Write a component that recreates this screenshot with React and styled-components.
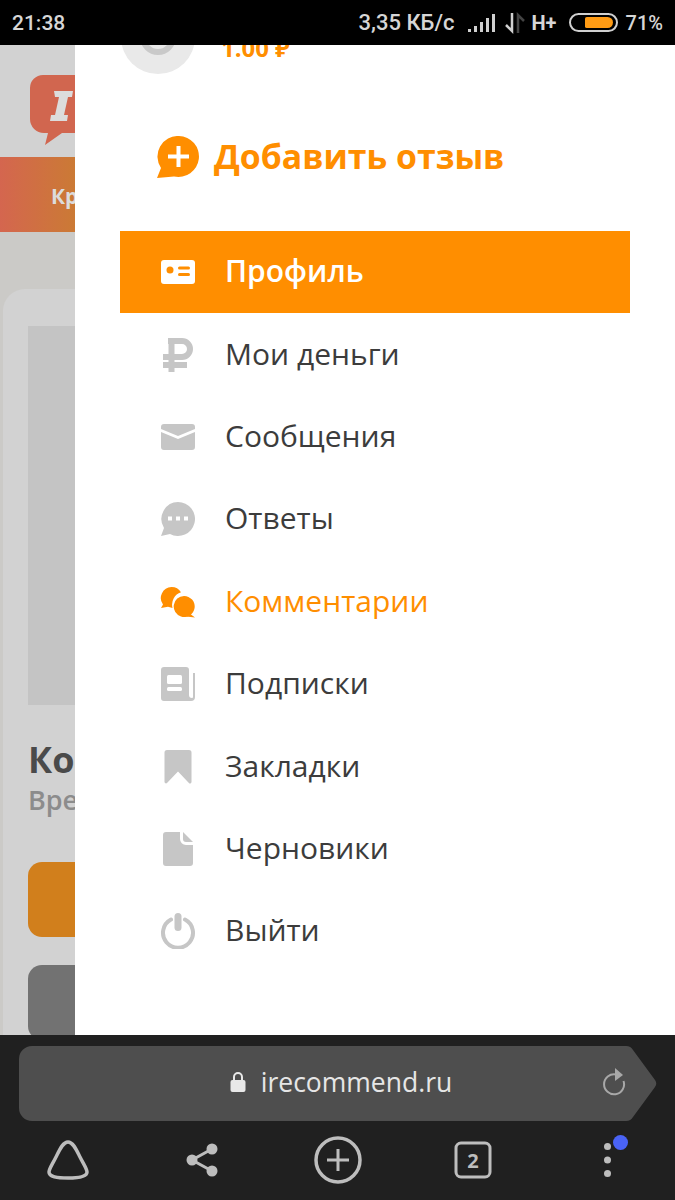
import React from 'react'
import styled, { createGlobalStyle } from 'styled-components'

const GlobalStyle = createGlobalStyle`
    html, body {
        margin: 0;
        padding: 0;
        background: #000;
    }
    * {
        box-sizing: border-box;
    }
`

const Screen = styled.div`
    width: 675px;
    height: 1200px;
    display: flex;
    flex-direction: column;
    overflow: hidden;
    font-family: "Open Sans", "Noto Sans", sans-serif;
`

const StatusBar = styled.div`
    height: 45px;
    flex: none;
    background: #000;
    color: #d6d6d6;
    display: flex;
    align-items: center;
    justify-content: space-between;
    padding: 0 12px;
    font-family: Roboto, sans-serif;
    font-size: 20px;
    font-weight: 500;
`

const Clock = styled.span`
    font-size: 21px;
`

const StatusRight = styled.div`
    display: flex;
    align-items: center;
`

const Speed = styled.span`
    font-size: 22px;
    margin-right: 13px;
`

const Network = styled.span`
    margin: 0 12px 0 7px;
    font-weight: 700;
`

const BatteryShell = styled.div`
    width: 49px;
    height: 19px;
    border: 2px solid #d0d0d0;
    border-radius: 10px;
    padding: 2px 3px 2px 14px;
    margin-right: 8px;
`

const BatteryFill = styled.div`
    height: 100%;
    background: #ff9b14;
    border-radius: 2px 6px 6px 2px;
`

const Main = styled.div`
    flex: 1;
    min-height: 0;
    display: grid;
    grid-template-columns: 75px 600px;
`

const Backdrop = styled.div`
    background: #d2d2d2;
    overflow: hidden;
    display: flex;
    flex-direction: column;
`

const LogoRow = styled.div`
    height: 112px;
    flex: none;
    padding: 28px 0 0 28px;
`

const Band = styled.div`
    height: 75px;
    flex: none;
    background: linear-gradient(90deg, #d4664f, #cb7a35);
    color: #dcdcdc;
    font-size: 21px;
    font-weight: 700;
    padding: 25px 0 0 51px;
    white-space: nowrap;
    overflow: hidden;
`

const Feed = styled.div`
    flex: 1;
    background: #cbcac7;
    padding-top: 57px;
    padding-left: 3px;
`

const Card = styled.div`
    height: 800px;
    width: 120px;
    background: #d2d2d2;
    border-radius: 22px 0 0 0;
    padding: 37px 0 0 25px;
`

const CardImage = styled.div`
    height: 379px;
    background: #c4c4c4;
`

const CardTitle = styled.div`
    margin-top: 32px;
    font-size: 36px;
    line-height: 46px;
    font-weight: 700;
    color: #4a4a4a;
    white-space: nowrap;
`

const CardSub = styled.div`
    font-size: 27px;
    line-height: 34px;
    font-weight: 600;
    color: #8c8c8c;
    white-space: nowrap;
`

const CardButton = styled.div`
    height: 75px;
    margin-top: ${p => p.$gap}px;
    border-radius: 14px 0 0 14px;
    background: ${p => p.$color};
`

const Drawer = styled.div`
    background: #fff;
    overflow: hidden;
    padding-left: 45px;
`

const Account = styled.div`
    display: flex;
    margin-top: -45px;
    height: 73px;
`

const Avatar = styled.div`
    width: 74px;
    height: 74px;
    margin-left: 1px;
    flex: none;
    border-radius: 50%;
    background: #e9e9e9;
    display: flex;
    align-items: center;
    justify-content: center;
`

const AvatarRing = styled.div`
    width: 36px;
    height: 36px;
    border-radius: 50%;
    border: 6px solid #c9c9c9;
`

const Balance = styled.div`
    margin: 33px 0 0 26px;
    font-size: 24px;
    line-height: 30px;
    font-weight: 700;
    color: #ff8e00;
    white-space: nowrap;
`

const AddReview = styled.div`
    height: 158px;
    display: flex;
    align-items: center;
    gap: 15px;
    padding: 10px 0 0 37px;
    color: #ff8e00;
    font-size: 33.8px;
    font-weight: 700;
`

const ReviewLabel = styled.span`
    margin-bottom: 3px;
`

const Menu = styled.div`
    width: 510px;
`

const MenuItem = styled.div`
    height: 82.4px;
    display: flex;
    align-items: center;
    gap: 29px;
    padding-left: 40px;
    font-size: 30px;
    font-weight: ${p => (p.$active ? 600 : 400)};
    color: ${p => (p.$active ? '#fff' : p.$accent ? '#ff8e00' : '#3c3c3c')};
    background: ${p => (p.$active ? '#ff8e00' : 'transparent')};
`

const MenuLabel = styled.span`
    margin-bottom: 3px;
`

const IconSlot = styled.span`
    width: 36px;
    height: 36px;
    flex: none;
    display: flex;
    align-items: center;
    justify-content: center;
`

const BrowserBar = styled.div`
    height: 165px;
    flex: none;
    background: #202020;
    padding: 11px 18px 0 19px;
`

const UrlBar = styled.div`
    position: relative;
    height: 75px;
    display: flex;
    align-items: center;
    justify-content: center;
    gap: 15px;
    padding-left: 6px;
    color: #e6e6e6;
    font-size: 26.5px;
`

const UrlShape = styled.svg`
    position: absolute;
    inset: 0;
    width: 638px;
    height: 75px;
`

const UrlText = styled.span`
    position: relative;
    margin-bottom: 3px;
`

const LockIcon = styled.svg`
    position: relative;
    margin-bottom: 3px;
`

const ReloadSlot = styled.span`
    position: absolute;
    right: 31px;
    top: 22px;
    display: flex;
`

const Toolbar = styled.div`
    height: 70px;
    margin: 0 -18px 0 -19px;
    padding-top: 7px;
    display: grid;
    grid-template-columns: repeat(5, 135px);
    justify-items: center;
    align-items: center;
`

const ToolButton = styled.span`
    position: relative;
    display: flex;
`

const Dot = styled.span`
    position: absolute;
    top: -8px;
    left: 9px;
    width: 15px;
    height: 15px;
    border-radius: 50%;
    background: #4a63f5;
`

const ProfileIcon = () => (
    <svg width="36" height="26" viewBox="0 0 36 26">
        <rect x="1" y="1" width="34" height="24" rx="3" fill="#fff" />
        <circle cx="10" cy="11" r="3.5" fill="#ff8e00" />
        <rect x="18" y="7.5" width="12" height="3" rx="1.5" fill="#ff8e00" />
        <rect x="18" y="14" width="12" height="3" rx="1.5" fill="#ff8e00" />
    </svg>
)

const RubleIcon = () => (
    <svg width="30" height="36" viewBox="0 0 30 36">
        <path d="M8.500 1v34M5 4h14a8 8 0 0 1 0 16H0M0 28h24" fill="none" stroke="#c6c6c6" strokeWidth="6" />
    </svg>
)

const MailIcon = () => (
    <svg width="36" height="26" viewBox="0 0 36 26">
        <path d="M1 3a3 3 0 0 1 3-3h28a3 3 0 0 1 3 3v2L18 12 1 5z" fill="#c6c6c6" />
        <path d="M1 8l17 7 17-7v15a3 3 0 0 1-3 3H4a3 3 0 0 1-3-3z" fill="#c6c6c6" />
    </svg>
)

const AnswersIcon = () => (
    <svg width="36" height="36" viewBox="0 0 36 36">
        <path d="M18 1a17 17 0 1 1-8 32L1 35l3-8A17 17 0 0 1 18 1z" fill="#c6c6c6" />
        <rect x="8" y="15.5" width="4" height="4" fill="#fff" />
        <rect x="16" y="15.5" width="4" height="4" fill="#fff" />
        <rect x="24" y="15.5" width="4" height="4" fill="#fff" />
    </svg>
)

const CommentsIcon = () => (
    <svg width="36" height="32" viewBox="0 0 36 32">
        <path d="M11.500 1a11 11 0 0 1 9.500 5.300a13 13 0 0 0-8.500 15.700L8 20.800L1 22l2-3.500A11 11 0 0 1 11.500 1z" fill="#ff8e00" />
        <path d="M24 10a10.500 10.500 0 1 1-3 20.500a10.500 10.500 0 0 1 3-20.500z" fill="#ff8e00" />
        <path d="M29 27l6 4.500l-9-1z" fill="#ff8e00" />
    </svg>
)

const NewsIcon = () => (
    <svg width="34" height="34" viewBox="0 0 34 34">
        <path d="M3 0h22a3 3 0 0 1 3 3v25a3 3 0 0 0 3 3a2 2 0 0 0 1-.500V6h2v24a4 4 0 0 1-4 4H3a3 3 0 0 1-3-3V3a3 3 0 0 1 3-3z" fill="#c6c6c6" />
        <rect x="6" y="8" width="15" height="9" rx="1.500" fill="#fff" />
        <rect x="6" y="20" width="15" height="4" rx="1.500" fill="#fff" />
    </svg>
)

const BookmarkIcon = () => (
    <svg width="28" height="34" viewBox="0 0 28 34">
        <path d="M3 0h22a2.500 2.500 0 0 1 2.500 2.500V32a1.500 1.500 0 0 1-2.600 1L14 21.500L3 33a1.500 1.500 0 0 1-2.500-1V2.500A2.500 2.500 0 0 1 3 0z" fill="#c6c6c6" />
    </svg>
)

const DraftIcon = () => (
    <svg width="30" height="34" viewBox="0 0 30 34">
        <path d="M3 0h14v7a6 6 0 0 0 6 6h7v18a3 3 0 0 1-3 3H3a3 3 0 0 1-3-3V3a3 3 0 0 1 3-3z" fill="#c6c6c6" />
        <path d="M20 0l10 10h-7a3 3 0 0 1-3-3z" fill="#c6c6c6" />
    </svg>
)

const PowerIcon = () => (
    <svg width="36" height="36" viewBox="0 0 36 36">
        <path d="M11 6.500a15 15 0 1 0 14 0" fill="none" stroke="#c6c6c6" strokeWidth="4" strokeLinecap="round" />
        <rect x="14.500" y="0" width="7" height="18" rx="3.500" fill="#c6c6c6" />
    </svg>
)

const menuItems = [
    { label: 'Профиль', icon: <ProfileIcon />, active: true },
    { label: 'Мои деньги', icon: <RubleIcon /> },
    { label: 'Сообщения', icon: <MailIcon /> },
    { label: 'Ответы', icon: <AnswersIcon /> },
    { label: 'Комментарии', icon: <CommentsIcon />, accent: true },
    { label: 'Подписки', icon: <NewsIcon /> },
    { label: 'Закладки', icon: <BookmarkIcon /> },
    { label: 'Черновики', icon: <DraftIcon /> },
    { label: 'Выйти', icon: <PowerIcon /> },
]

const App = () => {
    return (
        <Screen>
            <GlobalStyle />
            <StatusBar>
                <Clock>21:38</Clock>
                <StatusRight>
                    <Speed>3,35 КБ/с</Speed>
                    <svg width="27" height="22" viewBox="0 0 27 22">
                        <rect x="0" y="17" width="3" height="3" fill="#d0d0d0" />
                        <rect x="6" y="14" width="3" height="6" fill="#d0d0d0" />
                        <rect x="12" y="10" width="3" height="10" fill="#d0d0d0" />
                        <rect x="18" y="6" width="3" height="14" fill="#d0d0d0" />
                        <rect x="24" y="2" width="3" height="18" fill="#d0d0d0" />
                    </svg>
                    <svg width="20" height="24" viewBox="0 0 20 24" style={{ marginLeft: 10 }}>
                        <path d="M7 2v18l-6-6" fill="none" stroke="#d0d0d0" strokeWidth="2.500" />
                        <path d="M13 22V4l6 6" fill="none" stroke="#444" strokeWidth="2.500" />
                    </svg>
                    <Network>H+</Network>
                    <BatteryShell><BatteryFill /></BatteryShell>
                    <span>71%</span>
                </StatusRight>
            </StatusBar>
            <Main>
                <Backdrop>
                    <LogoRow>
                        <svg width="47" height="74" viewBox="0 0 47 74">
                            <path d="M15 2h32v58H34L17 72l3-12h-4A14 14 0 0 1 2 46V15A13 13 0 0 1 15 2z" fill="#d1664f" />
                            <path d="M26 18h19l-1 6h-4l-4 18h4l-1 6H22l1-6h4l4-18h-4z" fill="#dcdcdc" />
                        </svg>
                    </LogoRow>
                    <Band>Кр</Band>
                    <Feed>
                        <Card>
                            <CardImage />
                            <CardTitle>Ко</CardTitle>
                            <CardSub>Вре</CardSub>
                            <CardButton $color="#d17f1c" $gap={45} />
                            <CardButton $color="#727272" $gap={28} />
                        </Card>
                    </Feed>
                </Backdrop>
                <Drawer>
                    <Account>
                        <Avatar><AvatarRing /></Avatar>
                        <Balance>1.00 ₽</Balance>
                    </Account>
                    <AddReview>
                        <svg width="42" height="42" viewBox="0 0 42 42">
                            <path d="M22 0a20.500 20.500 0 1 1-5 40.500L0 42l4-10A20.500 20.500 0 0 1 22 0z" fill="#ff8e00" />
                            <path d="M21.500 10v21M11 20.500h21" stroke="#fff" strokeWidth="4" />
                        </svg>
                        <ReviewLabel>Добавить отзыв</ReviewLabel>
                    </AddReview>
                    <Menu>
                        {menuItems.map(item => (
                            <MenuItem key={item.label} $active={item.active} $accent={item.accent}>
                                <IconSlot>{item.icon}</IconSlot>
                                <MenuLabel>{item.label}</MenuLabel>
                            </MenuItem>
                        ))}
                    </Menu>
                </Drawer>
            </Main>
            <BrowserBar>
                <UrlBar>
                    <UrlShape viewBox="0 0 638 75">
                        <path d="M13 0H607a8 8 0 0 1 7 4l22 30a6 6 0 0 1 0 7l-22 30a8 8 0 0 1-7 4H13a13 13 0 0 1-13-13V13A13 13 0 0 1 13 0z" fill="#4e4e4e" />
                    </UrlShape>
                    <LockIcon width="16" height="20" viewBox="0 0 16 20">
                        <rect x="0.500" y="8" width="15" height="12" rx="2" fill="#e8e8e8" />
                        <path d="M4 9V5a4 4 0 0 1 8 0v4" fill="none" stroke="#e8e8e8" strokeWidth="2" />
                    </LockIcon>
                    <UrlText>irecommend.ru</UrlText>
                    <ReloadSlot>
                        <svg width="24" height="28" viewBox="0 0 24 28">
                            <path d="M14 6.500A10 10 0 1 0 21.500 13" fill="none" stroke="#a8a8a8" strokeWidth="2" />
                            <path d="M13 0l8 7-8 6z" fill="#a8a8a8" />
                        </svg>
                    </ReloadSlot>
                </UrlBar>
                <Toolbar>
                    <ToolButton>
                        <svg width="42" height="40" viewBox="0 0 42 40">
                            <path d="M21 2C26 2 29 9 33 17C37 25 40 29 40 32C40 37 31 38 21 38C10 38 2 37 2 32C2 29 5 25 9 17C13 9 16 2 21 2z" fill="none" stroke="#bdbdbd" strokeWidth="3.500" />
                        </svg>
                    </ToolButton>
                    <ToolButton>
                        <svg width="32" height="36" viewBox="0 0 32 36" style={{ marginLeft: -2 }}>
                            <path d="M26 7L6 18l20 11" fill="none" stroke="#bdbdbd" strokeWidth="3" />
                            <circle cx="26" cy="7" r="5.500" fill="#bdbdbd" />
                            <circle cx="6" cy="18" r="5.500" fill="#bdbdbd" />
                            <circle cx="26" cy="29" r="5.500" fill="#bdbdbd" />
                        </svg>
                    </ToolButton>
                    <ToolButton>
                        <svg width="48" height="48" viewBox="0 0 48 48">
                            <circle cx="24" cy="24" r="22" fill="none" stroke="#bdbdbd" strokeWidth="3.500" />
                            <path d="M24 13v22M13 24h22" stroke="#bdbdbd" strokeWidth="3" />
                        </svg>
                    </ToolButton>
                    <ToolButton>
                        <svg width="38" height="38" viewBox="0 0 38 38">
                            <rect x="2" y="2" width="34" height="34" rx="5" fill="none" stroke="#bdbdbd" strokeWidth="3" />
                            <text x="19" y="26.500" textAnchor="middle" fontFamily="Open Sans" fontWeight="700" fontSize="20" fill="#bdbdbd">2</text>
                        </svg>
                    </ToolButton>
                    <ToolButton>
                        <svg width="7" height="34" viewBox="0 0 7 34">
                            <circle cx="3.500" cy="3.500" r="3.500" fill="#bdbdbd" />
                            <circle cx="3.500" cy="17" r="3.500" fill="#bdbdbd" />
                            <circle cx="3.500" cy="30.500" r="3.500" fill="#bdbdbd" />
                        </svg>
                        <Dot />
                    </ToolButton>
                </Toolbar>
            </BrowserBar>
        </Screen>
    )
}

export default App
